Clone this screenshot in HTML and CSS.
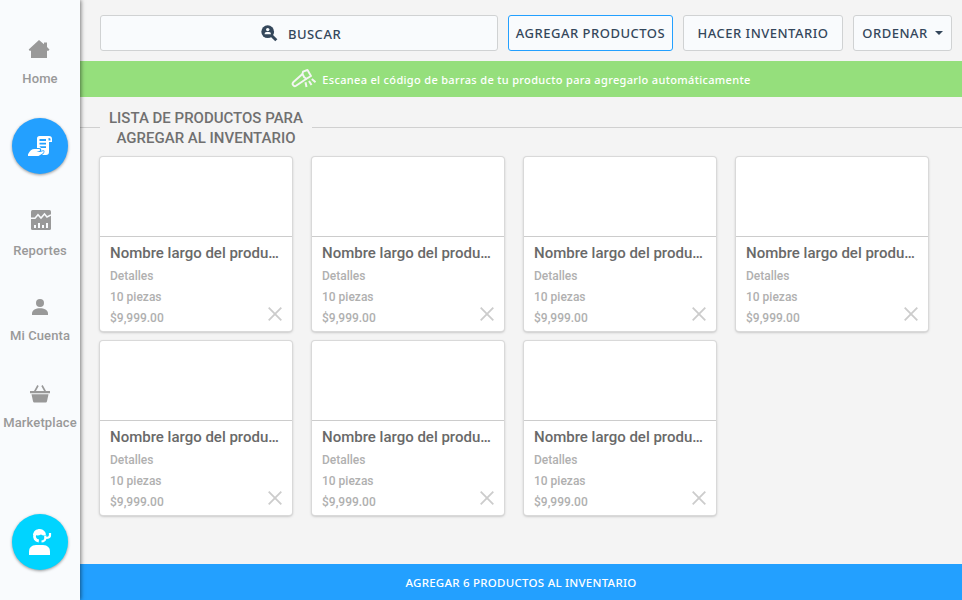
FILE: index.html
```
<!DOCTYPE html>
<html lang="es">
<head>
<meta charset="utf-8">
<title>Inventario</title>
<link rel="stylesheet" href="styles.css">
</head>
<body>
<div class="app">
  <nav class="sidebar">
    <a class="nav-item home"><svg width="22" height="20" viewBox="0 0 22 20"><path d="M11 1L16 5.3V3.5H19V8L21.5 10.5L20.5 11.8H19V19H3V11.8H1.5L.7 10.5Z"/></svg><span>Home</span></a>
    <a class="round inventory"><svg width="24" height="22" viewBox="0 0 24 22"><path fill-rule="evenodd" d="M11.5 1H21Q24 1 24 4V7H21V17Q21 20 18 20H14Q17 18 16.5 16Q16 14.5 13 15.8Q14 13 11 13H9V3.5Q9 1 11.5 1ZM11.5 4V6H18V4ZM11.5 7.7V9.5H18V7.7ZM11.5 11.2L13 13H18V11.2ZM20.5 3V5.5H22.5V4Q22.5 3 20.5 3Z"/><path d="M0 21V19.3Q2.5 14 6.5 14H11Q13 14.5 11.5 16L8.5 17H12L15.5 16Q16.5 17 14.5 18.5L10.5 21Z"/></svg></a>
    <a class="nav-item reports"><svg width="20" height="20" viewBox="0 0 20 20"><rect width="20" height="20" rx="1.5"/><path d="M0 8.2H4L7 4.7L10 8L13.5 4L16 7L20 5" fill="none" stroke="#f9fbfd" stroke-width="1.5"/><path d="M3 15H5V18H3ZM7 13H9V18H7ZM11 15H13V18H11ZM15 13H17V18H15Z" fill="#f9fbfd"/></svg><span>Reportes</span></a>
    <a class="nav-item account"><svg width="16" height="16" viewBox="0 0 16 16"><circle cx="8" cy="4" r="4"/><path d="M0 16V14.5C0 11 4 9.3 8 9.3S16 11 16 14.5V16Z"/></svg><span>Mi Cuenta</span></a>
    <a class="nav-item market"><svg width="20" height="18" viewBox="0 0 20 18"><path d="M0 6H20V8.3H0ZM1.5 9.2H18.5L17 16.3Q16.8 17.5 15.7 17.5H4.3Q3.2 17.5 3 16.3Z"/><path d="M4.7 6.5L8 .5M15.3 6.5L12 .5" stroke="#999" stroke-width="1.6"/></svg><span>Marketplace</span></a>
    <a class="round support"><svg width="24" height="28" viewBox="0 0 24 28"><path d="M1 27V23.5Q1 17.5 8 17H15Q22 17.5 22 23.5V27Z"/><path d="M10.8 13C7.5 12.5 5.8 10 6.7 6.5" fill="none" stroke="#fff" stroke-width="2.8"/><path d="M5 7C5.5 3 8 1 12 1Q17 1.5 18 6.5Q16 8.3 13 6.5Q10 8 7 7Z"/><path d="M22 5V7.3Q22 10 18 10M17.3 7.5V10.5Q17 13.3 13.5 13.5" fill="none" stroke="#fff" stroke-width="2.2"/></svg></a>
  </nav>
  <main class="content">
    <header class="toolbar">
      <button class="btn search"><svg width="17" height="17" viewBox="0 0 17 17"><path d="M10.5 10.5L15.3 15.3" stroke="#34475b" stroke-width="3"/><circle cx="6.7" cy="6.7" r="6.4" fill="#34475b"/><circle cx="6.7" cy="4.6" r="1.7" fill="#f9fbfd"/><path d="M3.5 9.3Q3.5 7 5.5 7H8Q10 7 10 9.3Z" fill="#f9fbfd"/></svg><span>BUSCAR</span></button>
      <button class="btn add"><span>AGREGAR PRODUCTOS</span></button>
      <button class="btn count"><span>HACER INVENTARIO</span></button>
      <button class="btn sort"><span>ORDENAR</span><i class="caret"></i></button>
    </header>
    <div class="notice"><svg width="26" height="20" viewBox="0 0 26 20"><g fill="none" stroke="#f4f5f4" stroke-width="1.9" stroke-linejoin="round"><path d="M11.5 5L2.2 13.3Q1 14.7 2 16Q3.3 17.8 5 16.8L15.5 9.7"/><path d="M11.5 5L12 2.7L16.5 1L20 7L15.5 9.8L13.2 8.2Z"/><path d="M14.5 13.2L15.5 18M18 12L20.5 16M20.8 10L24.5 13.2" stroke-width="2"/></g></svg><span>Escanea el código de barras de tu producto para agregarlo automáticamente</span></div>
    <div class="heading"><h1>LISTA DE PRODUCTOS PARA<br>AGREGAR AL INVENTARIO</h1></div>
    <section class="grid" id="products"></section>
    <footer class="submit"><span>AGREGAR 6 PRODUCTOS AL INVENTARIO</span></footer>
  </main>
</div>
<script src="app.js"></script>
</body>
</html>
```
FILE: styles.css
```
* { box-sizing: border-box; }
body { margin: 0; background: #f4f4f4; font-family: Roboto, sans-serif; }
.app { display: flex; width: 962px; height: 600px; overflow: hidden; }
.sidebar {
  width: 80px; flex: none; display: flex; flex-direction: column; align-items: center;
  background: #f9fbfd; box-shadow: 1px 0 4px rgba(0,0,0,.5); z-index: 1; padding-top: 39px;
}
.nav-item { display: flex; flex-direction: column; align-items: center; fill: #999; color: #999; font-size: 13px; font-weight: 500; line-height: 16px; letter-spacing: .1px; white-space: nowrap; }
.home svg { margin-left: -2px; }
.home span { margin-top: 12px; }
.round { width: 56px; height: 56px; border-radius: 50%; display: flex; align-items: center; justify-content: center; fill: #fff; box-shadow: 0 1px 3px rgba(0,0,0,.4); }
.inventory { background: #23a0ff; margin-top: 31px; }
.reports { margin-top: 36px; }
.reports svg { margin-left: 2px; }
.reports span { margin-top: 13px; }
.account { margin-top: 40px; }
.account span { margin-top: 13px; }
.market { margin-top: 41px; }
.market span { margin-top: 12px; }
.support { background: #00d4ff; margin-top: auto; margin-bottom: 30px; }
.content { flex: 1; min-width: 0; display: flex; flex-direction: column; }
.toolbar { display: flex; gap: 10px; padding: 15px 10px 10px 20px; }
.btn {
  height: 36px; display: flex; align-items: center; justify-content: center; padding: 0;
  border: 1px solid #d0d2d3; border-radius: 3px; background: #f9fbfd; color: #34475b;
  font: 500 13px/18px "Noto Sans", sans-serif; letter-spacing: .5px; white-space: nowrap;
}
.search { width: 398px; gap: 10px; padding-left: 4px; }
.search span { padding-top: 2px; }
.add { width: 165px; border-color: #23a0ff; }
.count { width: 160px; }
.sort { width: 99px; gap: 7px; }
.caret { border: 4px solid transparent; border-top-color: #34475b; border-bottom: 0; }
.notice { height: 36px; background: #95df7c; color: #fff; display: flex; align-items: center; justify-content: center; gap: 5px; font: 500 11px/18px "Noto Sans", sans-serif; letter-spacing: .33px; white-space: nowrap; }
.notice span { padding-top: 2px; }
.heading { display: flex; align-items: center; height: 59px; padding-top: 2px; }
.heading::before, .heading::after { content: ""; height: 1px; background: #d0d0d0; width: 20px; }
.heading::after { flex: 1; }
.heading h1 { margin: 0; width: 212px; text-align: center; font-size: 15px; font-weight: 500; line-height: 20px; color: #707070; white-space: nowrap; }
.grid { display: grid; grid-template-columns: repeat(4, 192px); column-gap: 20px; row-gap: 10px; padding: 1px 0 0 20px; }
.card { position: relative; height: 174px; background: #fff; border-radius: 3px; box-shadow: 0 0 0 1px #d9d9d9, 0 1px 3px rgba(0,0,0,.35); }
.photo { height: 80px; border-bottom: 1px solid #ccc; }
.details { padding: 6px 10px; }
.card h2 { margin: 0 0 3px; font-size: 15px; line-height: 20px; font-weight: 500; color: #696969; white-space: nowrap; }
.card p { margin: 0; font-size: 12px; line-height: 21px; font-weight: 500; color: #b0b0b0; }
.remove { position: absolute; right: 10px; bottom: 10px; }
.submit { margin-top: auto; height: 36px; background: #23a0ff; color: #fff; display: flex; align-items: center; justify-content: center; font: 500 11.5px/18px "Noto Sans", sans-serif; letter-spacing: .25px; padding-top: 2px; }
```
FILE: app.js
```
const products = Array.from({ length: 7 }, () => ({
  name: "Nombre largo del produ…", details: "Detalles", stock: "10 piezas", price: "$9,999.00"
}));

document.getElementById("products").innerHTML = products.map(p => `
  <article class="card">
    <div class="photo"></div>
    <div class="details">
      <h2>${p.name}</h2>
      <p>${p.details}</p>
      <p>${p.stock}</p>
      <p>${p.price}</p>
    </div>
    <svg class="remove" width="14" height="14" viewBox="0 0 14 14"><path d="M.7.7L13.3 13.3M13.3.7L.7 13.3" stroke="#ccc" stroke-width="1.8"/></svg>
  </article>`).join("");
```
